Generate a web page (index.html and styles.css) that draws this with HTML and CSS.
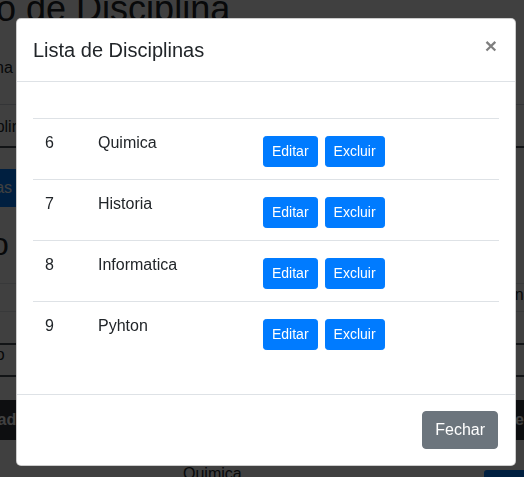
FILE: index.html
```html
<!DOCTYPE html>
<html lang="pt-BR">
<head>
<meta charset="utf-8">
<title>Cadastro de Disciplina</title>
<link rel="stylesheet" href="styles.css">
</head>
<body>
<main class="page">
  <h1 class="page-title">Cadastro de Disciplina</h1>
  <label class="field-label">Nome da Disciplina</label>
  <div class="field">Disciplina</div>
  <button class="bg-btn">Listar Disciplinas</button>
  <h2 class="section-title">Cadastro de Professor</h2>
  <div class="bg-row bg-row-a"><span class="bg-row-text">Disciplina</span></div>
  <div class="bg-row bg-row-b"></div>
  <div class="bg-row bg-row-c"><span class="bg-row-code">Codigo</span></div>
  <div class="bg-thead"><span class="th-left">Cadastrado</span><span class="th-right">editar</span></div>
  <div class="bg-trow"><span class="td-name">Quimica</span><button class="bg-btn-small">Editar</button></div>
</main>

<div class="backdrop"></div>

<div class="modal" role="dialog">
  <div class="modal-header">
    <h5 class="modal-title">Lista de Disciplinas</h5>
    <button class="close" type="button">&times;</button>
  </div>
  <div class="modal-body">
    <table class="table">
      <tbody>
        <tr>
          <td class="col-id">6</td>
          <td class="col-name">Quimica</td>
          <td><div class="actions"><button class="btn-sm">Editar</button><button class="btn-sm">Excluir</button></div></td>
        </tr>
        <tr>
          <td class="col-id">7</td>
          <td class="col-name">Historia</td>
          <td><div class="actions"><button class="btn-sm">Editar</button><button class="btn-sm">Excluir</button></div></td>
        </tr>
        <tr>
          <td class="col-id">8</td>
          <td class="col-name">Informatica</td>
          <td><div class="actions"><button class="btn-sm">Editar</button><button class="btn-sm">Excluir</button></div></td>
        </tr>
        <tr>
          <td class="col-id">9</td>
          <td class="col-name">Pyhton</td>
          <td><div class="actions"><button class="btn-sm">Editar</button><button class="btn-sm">Excluir</button></div></td>
        </tr>
      </tbody>
    </table>
  </div>
  <div class="modal-footer">
    <button class="btn-secondary" type="button">Fechar</button>
  </div>
</div>
</body>
</html>
```

FILE: styles.css
```css
html, body {
  margin: 0;
  height: 477px;
  overflow: hidden;
}
body {
  background: #fff;
  font-family: "Liberation Sans", Arial, sans-serif;
  font-size: 16px;
  color: #212529;
}

/* background page */
.page {
  width: 524px;
}
.page-title {
  font-size: 36px;
  font-weight: 400;
  line-height: 43px;
  margin: -13px 0 0 -130px;
  white-space: nowrap;
}
.field-label {
  display: block;
  margin: 26px 0 0 -125px;
  line-height: 24px;
  white-space: nowrap;
}
.field {
  box-sizing: border-box;
  margin-top: 24px;
  height: 44px;
  padding-top: 10px;
  line-height: 24px;
  text-indent: -39px;
  border-top: 1px solid #ced4da;
  border-bottom: 2px solid #495057;
  white-space: nowrap;
}
.bg-btn {
  display: block;
  margin: 21px 0 0 -120px;
  height: 38px;
  padding: 0 12px;
  border: 0;
  border-radius: 4px;
  background: #007bff;
  color: #fff;
  font: inherit;
  line-height: 38px;
  white-space: nowrap;
}
.section-title {
  font-size: 32px;
  font-weight: 400;
  line-height: 38px;
  margin: 18px 0 0 -121px;
  white-space: nowrap;
}
.bg-row {
  box-sizing: border-box;
  white-space: nowrap;
}
.bg-row-a {
  margin-top: 20px;
  height: 28px;
  border-top: 1px solid #dee2e6;
  line-height: 22px;
}
.bg-row-text {
  margin-left: 464px;
}
.bg-row-b {
  height: 34px;
  border-top: 1px solid #dee2e6;
  border-bottom: 2px solid #495057;
}
.bg-row-c {
  height: 32px;
  padding-top: 2px;
  line-height: 16px;
  border-bottom: 2px solid #495057;
}
.bg-row-code {
  margin-left: -46px;
}
.bg-thead {
  display: flex;
  margin-top: 23px;
  height: 40px;
  background: #343a40;
  color: #fff;
  font-weight: 700;
  line-height: 40px;
  white-space: nowrap;
}
.th-left {
  flex: none;
  width: 88px;
  margin-left: -62px;
}
.th-right {
  margin-left: 489px;
}
.bg-trow {
  display: flex;
  align-items: flex-start;
  height: 37px;
  white-space: nowrap;
}
.td-name {
  margin: 22px 0 0 183px;
  line-height: 24px;
}
.bg-btn-small {
  margin: 30px 0 0 242px;
  height: 31px;
  padding: 0 8px;
  border: 0;
  border-radius: 3px;
  background: #007bff;
  color: #fff;
  font: inherit;
}

/* backdrop */
.backdrop {
  position: fixed;
  inset: 0;
  background: rgba(0, 0, 0, 0.75);
}

/* modal */
.modal {
  position: absolute;
  left: 16px;
  top: 18px;
  width: 500px;
  box-sizing: border-box;
  background: #fff;
  border: 1px solid rgba(0, 0, 0, 0.2);
  border-radius: 5px;
  color: #212529;
}
.modal-header {
  display: flex;
  align-items: flex-start;
  padding: 16px;
  border-bottom: 1px solid #dee2e6;
}
.modal-title {
  margin: 0;
  font-size: 20px;
  font-weight: 400;
  line-height: 30px;
}
.close {
  margin: -16px -16px -16px auto;
  padding: 16px 18px 16px 16px;
  background: transparent;
  border: 0;
  font-family: "Liberation Sans", Arial, sans-serif;
  font-size: 21px;
  font-weight: 700;
  line-height: 1;
  color: #000;
  opacity: 0.5;
  text-shadow: 0 1px 0 #fff;
}
.modal-body {
  padding: 16px;
}
.table {
  width: 100%;
  margin: 20px 0 16px;
  border-collapse: collapse;
}
.table td {
  padding: 12px;
  border-top: 1px solid #dee2e6;
  vertical-align: top;
  line-height: 24px;
  text-align: left;
}
.table .col-id {
  width: 29px;
}
.table .col-name {
  width: 141px;
}
.actions {
  display: flex;
  gap: 7px;
  padding-top: 5px;
}
.btn-sm {
  padding: 4px 8px;
  border: 1px solid #007bff;
  border-radius: 3.2px;
  background: #007bff;
  color: #fff;
  font-family: "Liberation Sans", Arial, sans-serif;
  font-size: 14px;
  line-height: 21px;
}
.modal-footer {
  display: flex;
  justify-content: flex-end;
  padding: 12px 13px 12px 12px;
  border-top: 1px solid #dee2e6;
}
.btn-secondary {
  margin: 4px;
  padding: 6px 12px;
  border: 1px solid #6c757d;
  border-radius: 4px;
  background: #6c757d;
  color: #fff;
  font-family: "Liberation Sans", Arial, sans-serif;
  font-size: 16px;
  line-height: 24px;
}
```
